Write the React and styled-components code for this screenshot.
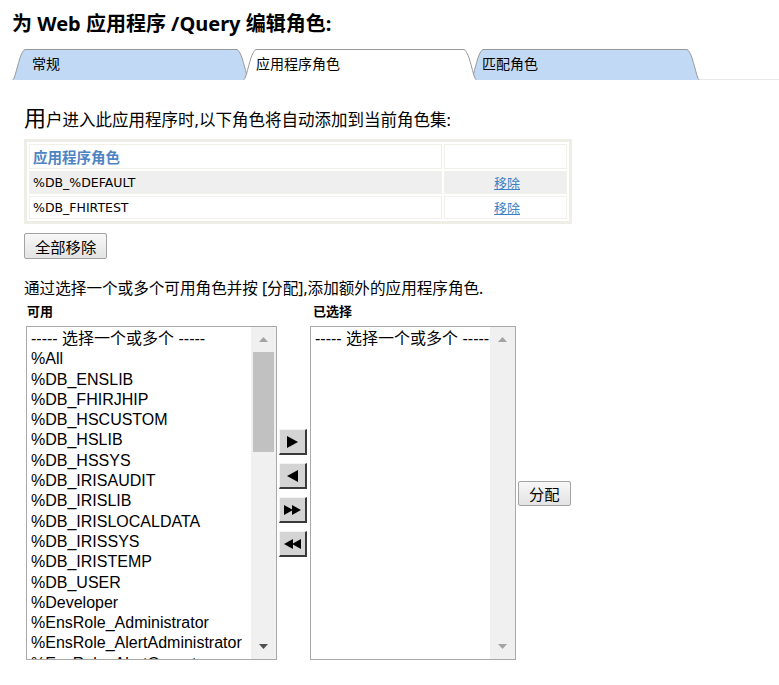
import React from "react";
import styled, { createGlobalStyle } from "styled-components";

const GlobalStyle = createGlobalStyle`
  body {
    margin: 0;
    background: #fff;
    color: #000;
    font-family: "Noto Sans", "Noto Sans CJK SC", sans-serif;
  }
`;

const Page = styled.div`
  padding-top: 12px;
`;

const Title = styled.h1`
  margin: 0 0 0 12px;
  font-size: 20px;
  line-height: 24px;
  font-weight: bold;
`;

// onglets
const TabBar = styled.div`
  display: flex;
  margin-top: 13px;
  padding-left: 12px;
  height: 31px;
`;

const Tab = styled.div`
  position: relative;
  flex: none;
  box-sizing: border-box;
  width: ${(p) => p.$w}px;
  height: 31px;
  margin-left: ${(p) => (p.$first ? 0 : -7)}px;
  padding-left: ${(p) => p.$indent}px;
  z-index: ${(p) => (p.$active ? 2 : 1)};
  font-size: 14px;
  line-height: 30px;
`;

const TabShape = styled.svg`
  position: absolute;
  left: 0;
  top: 0;
`;

const TabLabel = styled.span`
  position: relative;
`;

const TabFiller = styled.div`
  flex: 1;
  box-sizing: border-box;
  height: 31px;
  border-bottom: 1px solid #e8e8e8;
`;

const Content = styled.div`
  padding: 0 24px;
`;

const Intro = styled.p`
  margin: 25px 0 0;
  font-size: 16.5px;
  line-height: 24px;

  &::first-letter {
    font-size: 22px;
  }
`;

const RoleTable = styled.table`
  margin-top: 7px;
  width: 548px;
  border: 3px solid #efeee6;
  border-spacing: 2px;
`;

const HeadCell = styled.th`
  height: 23px;
  padding: 0 0 0 3px;
  border: 1px solid #f1f1ea;
  text-align: left;
  color: #4d84c4;
  font: bold 14.5px "Noto Sans CJK SC", sans-serif;
  width: ${(p) => (p.$w ? p.$w + "px" : "auto")};
`;

const Row = styled.tr`
  background: ${(p) => (p.$odd ? "#efefef" : "#fff")};
`;

const Cell = styled.td`
  height: 21px;
  padding: 0 0 0 3px;
  border: 1px solid #f1f1ea;
  font: 12.5px "DejaVu Sans", "Noto Sans CJK SC", sans-serif;
  text-align: ${(p) => (p.$center ? "center" : "left")};
`;

const Link = styled.a`
  color: #3d7fc6;
  text-decoration: underline;
  font: 13px "Noto Sans CJK SC", sans-serif;
  cursor: pointer;
`;

const Button = styled.button`
  display: block;
  height: ${(p) => p.$h || 26}px;
  padding: 0 10px;
  border: 1px solid #a3a3a3;
  border-radius: 2px;
  background: linear-gradient(#f8f8f8, #e3e3e3);
  color: #000;
  font: 15.3px "Noto Sans CJK SC", sans-serif;
  cursor: pointer;
`;

const RemoveAll = styled(Button)`
  margin-top: 9px;
`;

const Hint = styled.p`
  margin: 19px 0 0;
  font-size: 15.6px;
  line-height: 20px;
`;

// selecteur
const Picker = styled.div`
  display: grid;
  grid-template-columns: 253px 33px 206px auto;
  grid-template-rows: 24px 334px;
  margin-top: 4px;
`;

const ColLabel = styled.div`
  padding-left: 3px;
  font: bold 13px "Noto Sans CJK SC", sans-serif;
  line-height: 18px;
`;

const ListBox = styled.div`
  box-sizing: border-box;
  display: flex;
  height: 334px;
  margin-left: ${(p) => p.$offset || 0}px;
  border: 1px solid #a9a9a9;
  background: #fff;
`;

const Options = styled.div`
  flex: 1;
  overflow: hidden;
  padding: 2px 0 0 4px;
  font: 16px "Liberation Sans", "Noto Sans CJK SC", sans-serif;
  line-height: 20.3px;
  white-space: nowrap;
`;

const ScrollTrack = styled.div`
  flex: none;
  width: 25px;
  display: flex;
  flex-direction: column;
  background: #f0f0f0;
`;

const ScrollArrow = styled.div`
  flex: none;
  height: 25px;
  display: flex;
  align-items: center;
  justify-content: center;
`;

const ScrollSpace = styled.div`
  flex: 1;
`;

const Thumb = styled.div`
  margin: 0 2px;
  height: 100px;
  background: #c1c1c1;
`;

const MoveColumn = styled.div`
  align-self: center;
  display: flex;
  flex-direction: column;
  gap: 8px;
  margin-left: 2px;
`;

const MoveButton = styled.button`
  box-sizing: border-box;
  width: 28px;
  height: 26px;
  padding: 0;
  display: flex;
  align-items: center;
  justify-content: center;
  background: #d4d4d4;
  border-style: solid;
  border-width: 1px 2px 2px 1px;
  border-color: #f4f4f4 #3a3a3a #3a3a3a #f4f4f4;
  cursor: pointer;
`;

const AssignCell = styled.div`
  align-self: center;
  margin-left: 2px;
`;

const available = [
  "----- 选择一个或多个 -----",
  "%All",
  "%DB_ENSLIB",
  "%DB_FHIRJHIP",
  "%DB_HSCUSTOM",
  "%DB_HSLIB",
  "%DB_HSSYS",
  "%DB_IRISAUDIT",
  "%DB_IRISLIB",
  "%DB_IRISLOCALDATA",
  "%DB_IRISSYS",
  "%DB_IRISTEMP",
  "%DB_USER",
  "%Developer",
  "%EnsRole_Administrator",
  "%EnsRole_AlertAdministrator",
  "%EnsRole_AlertOperator",
];

const roles = ["%DB_%DEFAULT", "%DB_FHIRTEST"];

const TabOutline = ({ w, fill }) => (
  <TabShape width={w} height={31}>
    <path
      d={`M0.5,31 C4,30 7,3 13,0.5 L${w - 13},0.5 C${w - 7},3 ${w - 4},30 ${w - 0.5},31`}
      fill={fill}
      stroke="#999"
      strokeWidth="1"
    />
  </TabShape>
);

const Arrow = ({ up, color }) => (
  <svg width="9" height="5">
    <polygon points={up ? "0,5 4.5,0 9,5" : "0,0 4.5,5 9,0"} fill={color} />
  </svg>
);

const Tri = ({ dir, double }) => {
  const pts =
    dir === "r"
      ? double
        ? ["0,0 9,5 0,10", "8,0 17,5 8,10"]
        : ["0,0 11,6 0,12"]
      : double
      ? ["9,0 0,5 9,10", "17,0 8,5 17,10"]
      : ["11,0 0,6 11,12"];
  return (
    <svg width={double ? 17 : 11} height={double ? 10 : 12}>
      {pts.map((p) => (
        <polygon key={p} points={p} fill="#000" />
      ))}
    </svg>
  );
};

const App = () => {
  return (
    <Page>
      <GlobalStyle />
      <Title>为 Web 应用程序 /Query 编辑角色:</Title>

      <TabBar>
        <Tab $first $w={238} $indent={20}>
          <TabOutline w={238} fill="#c2d9f5" />
          <TabLabel>常规</TabLabel>
        </Tab>
        <Tab $active $w={234} $indent={13}>
          <TabOutline w={234} fill="#fff" />
          <TabLabel>应用程序角色</TabLabel>
        </Tab>
        <Tab $w={230} $indent={12}>
          <TabOutline w={230} fill="#c2d9f5" />
          <TabLabel>匹配角色</TabLabel>
        </Tab>
        <TabFiller />
      </TabBar>

      <Content>
        <Intro>用户进入此应用程序时,以下角色将自动添加到当前角色集:</Intro>

        <RoleTable>
          <thead>
            <tr>
              <HeadCell>应用程序角色</HeadCell>
              <HeadCell $w={118}></HeadCell>
            </tr>
          </thead>
          <tbody>
            {roles.map((r, i) => (
              <Row key={r} $odd={i % 2 === 0}>
                <Cell>{r}</Cell>
                <Cell $center>
                  <Link>移除</Link>
                </Cell>
              </Row>
            ))}
          </tbody>
        </RoleTable>

        <RemoveAll>全部移除</RemoveAll>

        <Hint>通过选择一个或多个可用角色并按 [分配],添加额外的应用程序角色.</Hint>

        <Picker>
          <ColLabel>可用</ColLabel>
          <div />
          <ColLabel>已选择</ColLabel>
          <div />

          <ListBox $offset={2}>
            <Options>
              {available.map((a) => (
                <div key={a}>{a}</div>
              ))}
            </Options>
            <ScrollTrack>
              <ScrollArrow>
                <Arrow up color="#a3a3a3" />
              </ScrollArrow>
              <ScrollSpace>
                <Thumb />
              </ScrollSpace>
              <ScrollArrow>
                <Arrow color="#505050" />
              </ScrollArrow>
            </ScrollTrack>
          </ListBox>

          <MoveColumn>
            <MoveButton>
              <Tri dir="r" />
            </MoveButton>
            <MoveButton>
              <Tri dir="l" />
            </MoveButton>
            <MoveButton>
              <Tri dir="r" double />
            </MoveButton>
            <MoveButton>
              <Tri dir="l" double />
            </MoveButton>
          </MoveColumn>

          <ListBox>
            <Options>
              <div>----- 选择一个或多个 -----</div>
            </Options>
            <ScrollTrack>
              <ScrollArrow>
                <Arrow up color="#a3a3a3" />
              </ScrollArrow>
              <ScrollSpace />
              <ScrollArrow>
                <Arrow color="#a3a3a3" />
              </ScrollArrow>
            </ScrollTrack>
          </ListBox>

          <AssignCell>
            <Button $h={25}>分配</Button>
          </AssignCell>
        </Picker>
      </Content>
    </Page>
  );
};

export default App;
